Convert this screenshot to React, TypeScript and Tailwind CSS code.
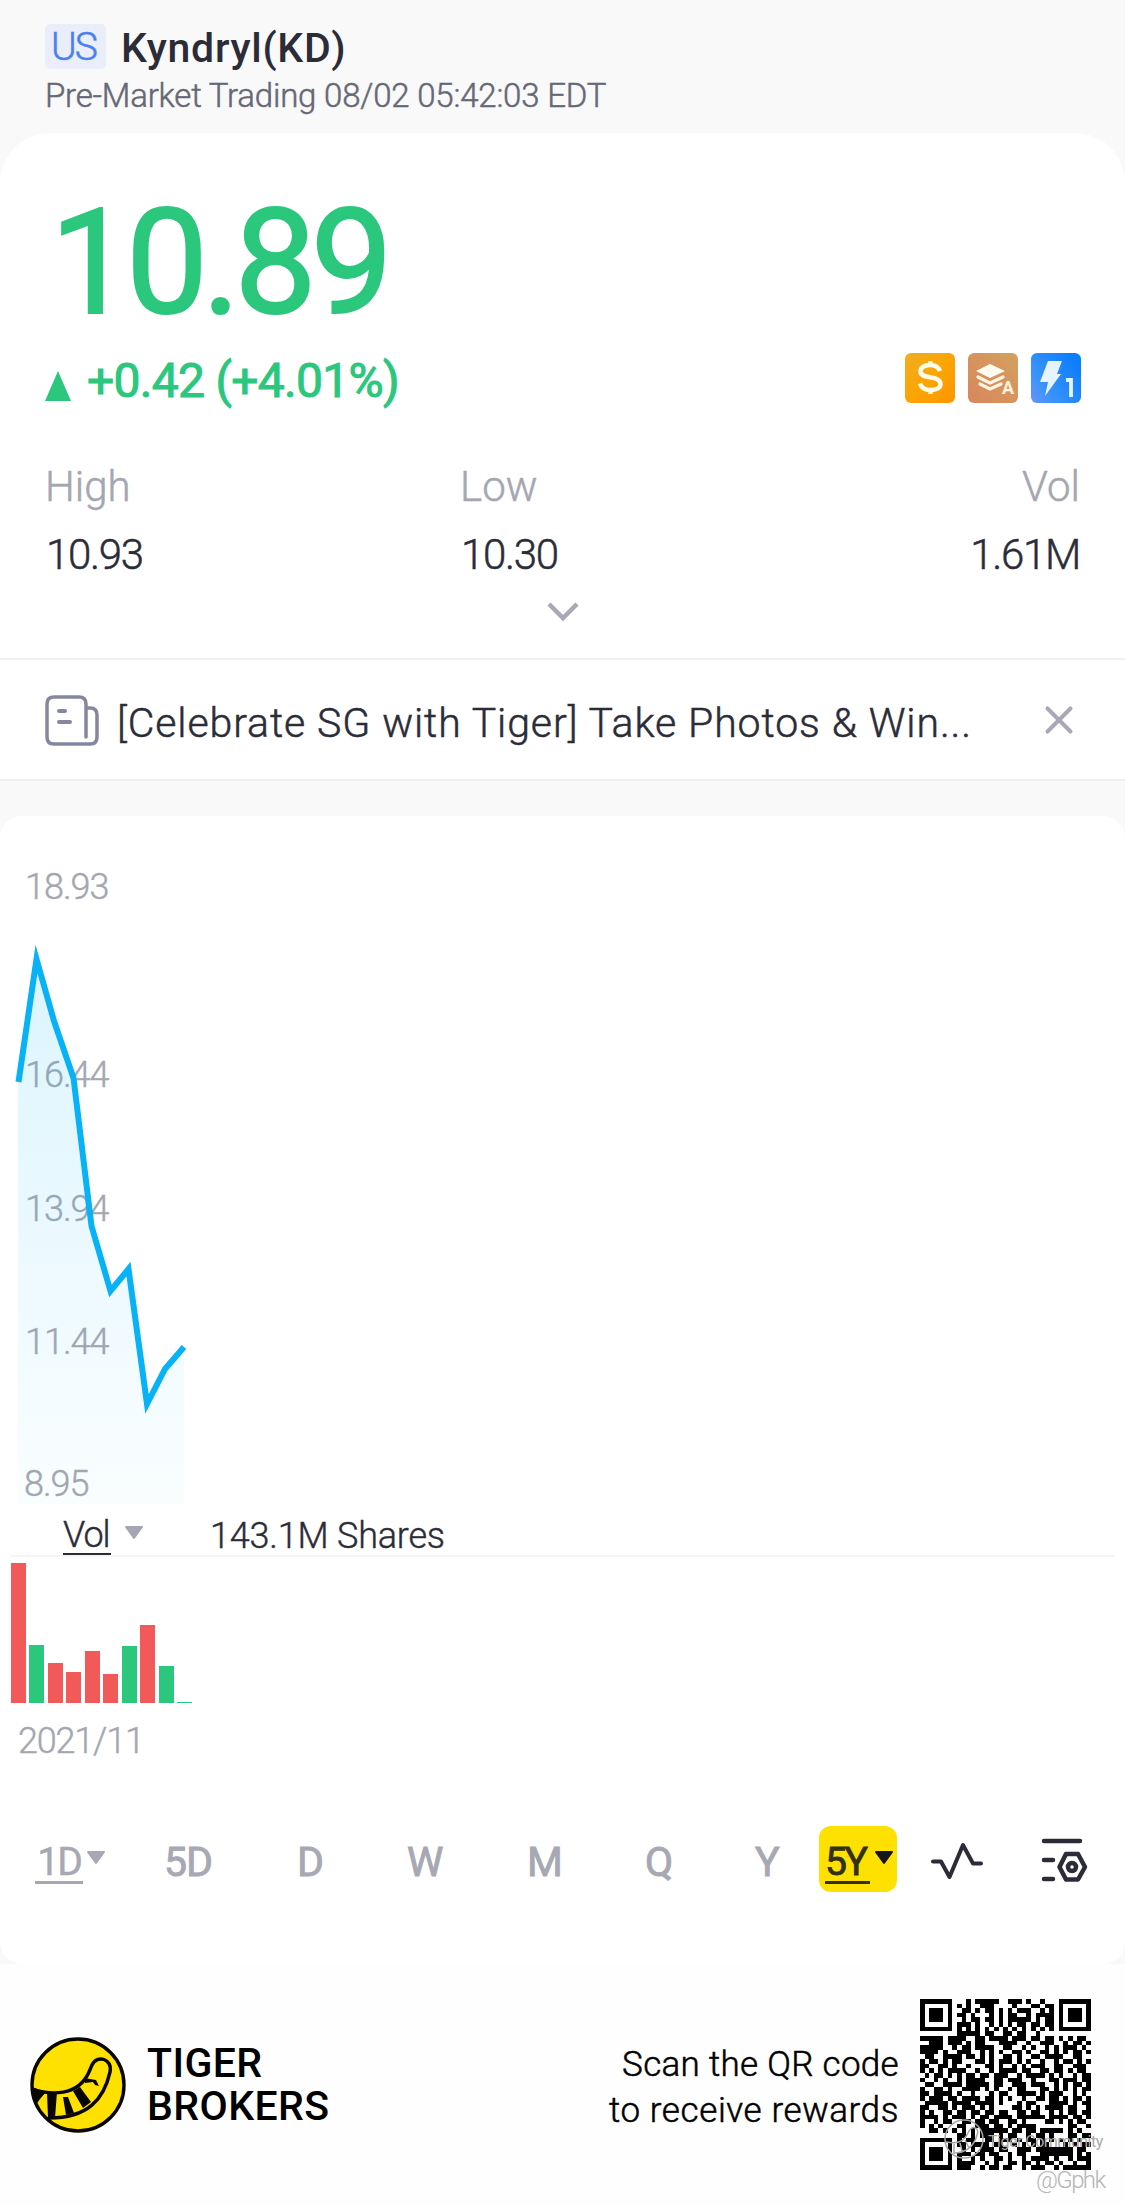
import { X } from "lucide-react"

const stats = [
  { label: "High", value: "10.93", align: "text-left" },
  { label: "Low", value: "10.30", align: "text-left" },
  { label: "Vol", value: "1.61M", align: "text-right" },
]

const volumes = [
  { h: 140, up: false },
  { h: 58, up: true },
  { h: 40, up: false },
  { h: 31, up: false },
  { h: 52, up: false },
  { h: 29, up: false },
  { h: 57, up: true },
  { h: 78, up: false },
  { h: 37, up: true },
  { h: 1.5, up: true },
]

const qrRows = [
  "#######...#.#####..###.#..#...#######",
  "#.....#.#.#..###....#...##.##.#.....#",
  "#.###.#..##.#.##.#.#.###..#.#.#.###.#",
  "#.###.#.##.#...#.#.##..#.####.#.###.#",
  "#.###.#..#.##.##.#.#####.#.##.#.###.#",
  "#.....#.###.#..#.#.#.##.##.##.#.....#",
  "#######.#.#.#.#.#.#.#.#.#.#.#.#######",
  "........#####.##..##.##..#...........",
  "#####.####..##.####.###.##.##.#.#.##.",
  "..###.###.#.##...####..#..###..#.##.#",
  "#####..#.##.####..##..#.#..#.#.###.#.",
  "####.#..###..#.#.#..##.#..##.#.#.##.#",
  ".##..####.##.#.#..##.#..##.####..##..",
  "#.##.#.##...##.#.###.#.#..#..#.##.#.#",
  "##..##.#..#...##.#..#.#.###..##..###.",
  "#.#.#.####..#..#.####.##..##.##.#.##.",
  ".#.##.#.#.##.##.###..#.####.#.#..#.##",
  "#..#.#..#.####..##.###..#...##.###.##",
  ".##..####.#####.##..###.###..#.#.##.#",
  "#..##.#..####.#.#..#.##...##.#.#.#.##",
  "##.####.#..#...#.##..####.#.###..#.#.",
  "#.###.##.####.##.#.#..#..##.##.#.##.#",
  ".#####.####.####.#...#.##...####.#.##",
  "##..##.#.###.#.#....##.#.#.####.##..#",
  "#.#..##.##.##.##.##..##.##..#.#.##.##",
  "####.#.###.#.##.####.######.####.##.#",
  "#..#.##..##.##.##..##.#....##.#.#.##.",
  "#.#.#...##..###.##.#.####.......##..#",
  "..##.#.#.#.#.######.##.##.#####.#.#..",
  "........##.#.###.#.##..#.##.#...##.##",
  "#######.#.##..##.###.#.##.#.#.#.#.#..",
  "#.....#.##.####.##..#.#.#.##...#.#.##",
  "#.###.#..#.#.###.##..###.########.##.",
  "#.###.#.###.##.##..#.##...#######.#.#",
  "#.###.#.#..#.#..##.#..#.####.#..#.###",
  "#.....#.####..#.#..##.##.#.##.#..#..#",
  "#######.###..#.##.##..#.###..#.######",
]

const qrPath = qrRows
  .map((row, y) => row.split("").map((c, x) => (c === "#" ? `M${x} ${y}h1v1h-1z` : "")).join(""))
  .join("")

function Caret({ className }: { className: string }) {
  return (
    <svg viewBox="0 0 20 15" className={className} fill="currentColor" stroke="currentColor" strokeWidth="2" strokeLinejoin="round">
      <path d="M2 2H18L10 13Z" />
    </svg>
  )
}

function TigerLogo({ className }: { className: string }) {
  return (
    <svg viewBox="0 0 96 96" className={className} fill="none">
      <circle cx="48" cy="48" r="46" fill="#ffe100" stroke="#080600" strokeWidth="3.4" />
      <path d="M2 52C20 58 48 60 59 35L62 28C67 17 83 22 80 35C74 62 58 81 19 81" stroke="#080600" strokeWidth="3.4" />
      <path d="M2 50L16 55L10 62L6 68Z M17 55H27L25 81H18Z M33 60L38 60L44 76L36 78Z M43 54L50 50L61 65L53 71Z M54 41L66 43L69 49L65 48L63 45L55 46Z" fill="#080600" />
    </svg>
  )
}

function Badges() {
  return (
    <div className="flex gap-[13px]">
      <svg viewBox="0 0 50 50" className="size-[50px]">
        <defs>
          <linearGradient id="gold" x1="0" y1="0" x2="1" y2="1">
            <stop stopColor="#f0ad22" />
            <stop offset="0.5" stopColor="#fba504" />
            <stop offset="1" stopColor="#ff9500" />
          </linearGradient>
        </defs>
        <rect width="50" height="50" rx="6" fill="url(#gold)" />
        <path d="M35 18C33 13 29 12 25 12C19 12 15.500 15 15.500 18.500C15.500 27 35.500 21.500 35.500 31C35.500 35 31 37 25.500 37C20 37 16.500 35 15 30.500M25.500 8V12M25.500 37V41" fill="none" stroke="#fffbe8" strokeWidth="4.500" />
      </svg>
      <svg viewBox="0 0 50 50" className="size-[50px]">
        <defs>
          <linearGradient id="bronze" x1="0" y1="1" x2="1" y2="0">
            <stop stopColor="#d8865e" />
            <stop offset="1" stopColor="#d3a15d" />
          </linearGradient>
        </defs>
        <rect width="50" height="50" rx="6" fill="url(#bronze)" />
        <path d="M22 11L37 18L22 25L8 18Z" fill="#fffaf0" />
        <path d="M10 24L22 30L35 24M12 31L22 36L33 31" fill="none" stroke="#fff3e2" strokeWidth="3.200" strokeLinecap="round" strokeLinejoin="round" />
        <text x="34" y="41" fill="#fff3e0" fontSize="18" fontWeight="700" fontFamily="Roboto, sans-serif">A</text>
      </svg>
      <svg viewBox="0 0 50 50" className="size-[50px]">
        <defs>
          <linearGradient id="blue" x1="0" y1="1" x2="1" y2="0.3">
            <stop stopColor="#6d91f5" />
            <stop offset="0.3" stopColor="#3c94fb" />
            <stop offset="1" stopColor="#0c7dfb" />
          </linearGradient>
        </defs>
        <rect width="50" height="50" rx="6" fill="url(#blue)" />
        <path d="M17 8H31L26 21H30L14 43L17 29H9Z" fill="#e6f4ff" />
        <path d="M35 27H40V44" fill="none" stroke="#e6f4ff" strokeWidth="3.800" />
      </svg>
    </div>
  )
}

function PriceChart() {
  return (
    <div className="relative h-[700px] text-[36px] leading-[44px] tracking-[-1px]">
      <span className="absolute left-[25px] top-[49px]">18.93</span>
      <span className="absolute left-[25px] top-[237px]">16.44</span>
      <span className="absolute left-[25px] top-[371px]">13.94</span>
      <span className="absolute left-[25px] top-[504px]">11.44</span>
      <span className="absolute left-[24px] top-[646px]">8.95</span>
      <svg viewBox="0 816 1125 700" className="relative h-[700px] w-full" fill="none">
        <defs>
          <linearGradient id="area" x1="0" y1="0" x2="0" y2="1">
            <stop stopColor="#00b4f4" stopOpacity="0.14" />
            <stop offset="1" stopColor="#00b4f4" stopOpacity="0.02" />
          </linearGradient>
        </defs>
        <path d="M18 1082L36 959L54 1021L73 1078L91.500 1226L110 1291L128.500 1269L147 1404L164 1369L184 1347V1504H18Z" fill="url(#area)" />
        <path d="M18.500 1082L36.500 959L54 1021L73.500 1078L91.500 1226L110.500 1291L128.500 1269L147 1404L165 1369L184 1347" stroke="#08b2f7" strokeWidth="6" strokeMiterlimit="10" />
      </svg>
    </div>
  )
}

export default function App() {
  return (
    <div className="h-[2205px] w-[1125px] overflow-hidden bg-[#f9f9f9] font-['Roboto',sans-serif] text-[#2b2c38]">
      {/* Header */}
      <header className="h-[133px] pl-[45px] pt-[23px]">
        <div className="flex h-[46px] items-center">
          <div className="flex h-[45px] w-[61px] items-center justify-center rounded-[5px] bg-[#e9eefa] pr-[4px] pt-[2px] text-[39px] font-light tracking-[-2px] text-[#4a7ff0] [-webkit-text-stroke:0.5px]">US</div>
          <h1 className="ml-[15px] mt-[5px] text-[41px] font-medium tracking-[0.7px]">Kyndryl(KD)</h1>
        </div>
        <p className="mt-[5px] text-[33px] font-light leading-[44px] tracking-[-0.2px] text-[#666876] [-webkit-text-stroke:0.5px]">Pre-Market Trading 08/02 05:42:03 EDT</p>
      </header>

      {/* Quote */}
      <section className="h-[527px] rounded-t-[50px] border-b-2 border-[#f0f0f1] bg-white px-[45px] pt-[61px]">
        <div className="pl-[5px] text-[146px] font-normal leading-[140px] tracking-[-6px] text-[#2ac77c] [-webkit-text-stroke:2px]">10.89</div>
        <div className="mt-[19px] flex h-[60px] items-center justify-between text-[#2ac77c]">
          <div className="flex items-center">
            <svg viewBox="0 0 26 30" className="mt-[6px] h-[30px] w-[26px]" fill="currentColor">
              <path d="M13 0L26 30H0Z" />
            </svg>
            <span className="ml-[16px] mt-[-4px] text-[48px] font-normal leading-[60px] tracking-[-0.7px] [-webkit-text-stroke:1px]">+0.42 (+4.01%)</span>
          </div>
          <div className="-mr-px -mt-[11px]">
            <Badges />
          </div>
        </div>
        <div className="mt-[46px] grid grid-cols-[415px_1fr_1fr] [-webkit-text-stroke:0.5px]">
          {stats.map((s) => (
            <div key={s.label} className={s.align}>
              <div className="text-[42px] font-light leading-[56px] text-[#a5a6b2]">{s.label}</div>
              <div className="mt-[12px] pl-px text-[42px] font-light leading-[56px] tracking-[-1.300px]">{s.value}</div>
            </div>
          ))}
        </div>
        <svg viewBox="0 0 32 20" className="mx-auto mt-[19px] h-[20px] w-[32px]" fill="none" stroke="#a8a8b6" strokeWidth="4.500">
          <path d="M2 2L16 16L30 2" />
        </svg>
      </section>

      {/* News */}
      <section className="flex h-[121px] items-center border-b-2 border-[#efefef] bg-white pl-[45px] pr-[43px]">
        <svg viewBox="0 0 54 51" className="mt-px h-[51px] w-[54px] shrink-0" fill="none" stroke="#85879f" strokeWidth="3.500" strokeLinecap="round">
          <path d="M41 42V9Q41 2 34 2H9Q2 2 2 9V42Q2 49 9 49H45Q52 49 52 42V20Q52 13 45 13H41" />
          <path d="M14 16H20M14 27H25" strokeWidth="4" />
        </svg>
        <p className="ml-[18px] mt-[8px] whitespace-nowrap text-[41px] font-light tracking-[0.9px] [-webkit-text-stroke:0.5px]">[Celebrate SG with Tiger] Take Photos &amp; Win...</p>
        <X className="ml-auto mt-px size-[46px] text-[#a8a8b6]" strokeWidth={2.1} />
      </section>

      {/* Chart */}
      <section className="mt-[35px] h-[1148px] rounded-[22px] bg-white font-light text-[#a5a6b0] [-webkit-text-stroke:0.4px]">
        <PriceChart />
        <div className="mx-[10px] flex h-[41px] items-center border-b-2 border-[#f5f5f5] pl-[53px] text-[36px] text-[#2b2c38]">
          <span className="h-[38px] w-[48px] border-b-[2px] border-[#2b2c38] leading-[37px] tracking-[-1px]">Vol</span>
          <Caret className="ml-[13px] mt-[-6px] h-[15px] w-[20px] text-[#a5a6b4]" />
          <span className="ml-[66px] tracking-[-0.2px]">143.1M Shares</span>
        </div>
        <div className="ml-[11px] flex h-[146px] items-end gap-[3.450px]">
          {volumes.map((v, i) => (
            <div key={i} className={v.up ? "w-[15px] bg-[#2ac77c]" : "w-[15px] bg-[#f25a59]"} style={{ height: v.h }} />
          ))}
        </div>
        <div className="ml-[18px] mt-[16px] text-[36px] leading-[44px] tracking-[-1.200px]">2021/11</div>

        {/* Periods */}
        <div className="mt-[63px] flex h-[66px] items-center text-[41px] font-normal leading-[44px] text-[#a7a8b4] [-webkit-text-stroke:0.9px]">
          <span className="ml-[35px] mt-[4px] h-[46px] w-[48px] shrink-0 border-b-[3px] border-[#a7a8b4] text-center text-[39px] leading-[49px] tracking-[-2px] [-webkit-text-stroke:0.5px]">1D</span>
          <Caret className="ml-[3px] mt-[-3px] h-[15px] w-[20px] shrink-0" />
          <span className="ml-[58px] mt-[6px] w-[50px] shrink-0 tracking-[-1px]">5D</span>
          <span className="ml-[83px] mt-[6px] w-[28px] shrink-0">D</span>
          <span className="ml-[82px] mt-[6px] w-[38px] shrink-0">W</span>
          <span className="ml-[82px] mt-[6px] w-[36px] shrink-0">M</span>
          <span className="ml-[82px] mt-[6px] w-[28px] shrink-0">Q</span>
          <span className="ml-[82px] mt-[6px] w-[26px] shrink-0">Y</span>
          <div className="ml-[38px] flex h-[66px] w-[78px] shrink-0 items-center rounded-[12px] bg-[#ffe100] pl-[6px] text-[#33301a]">
            <span className="mt-[4px] h-[46px] w-[45px] border-b-[3px] border-[#33301a] text-left text-[39px] leading-[49px] tracking-[-2.500px]">5Y</span>
            <Caret className="ml-[4px] mt-[-3px] h-[15px] w-[20px] text-[#15151d]" />
          </div>
          <svg viewBox="0 0 52 38" className="ml-[34px] mt-[3px] h-[38px] w-[52px] shrink-0" fill="none" stroke="#2b2c38" strokeWidth="4" strokeLinecap="round" strokeLinejoin="round">
            <path d="M2 19.500H10L18.500 35L32 3L42 21.500H50" />
          </svg>
          <svg viewBox="0 0 48 46" className="ml-[58px] mt-[2px] h-[46px] w-[48px] shrink-0" fill="none" stroke="#2b2c38" strokeWidth="4.500" strokeLinecap="round" strokeLinejoin="round">
            <path d="M3 4H39M3 23H12M3 42H12M25 17H37L44 30L37 42.500H25L18.500 30Z" />
            <circle cx="31" cy="30" r="4" />
          </svg>
        </div>
      </section>

      {/* Footer */}
      <footer className="flex h-[241px] bg-[#fefefe] text-black">
        <TigerLogo className="ml-[30px] mt-[73px] size-[96px]" />
        <div className="ml-[21px] mt-[78px] text-[41px] font-medium leading-[43px] tracking-[0.4px]">
          <div>TIGER</div>
          <div>BROKERS</div>
        </div>
        <div className="ml-auto mt-[78px] whitespace-nowrap text-right text-[35px] font-light leading-[46px] [-webkit-text-stroke:0.5px]">
          <div className="tracking-[0.3px]">Scan the QR code</div>
          <div className="tracking-[0.6px]">to receive rewards</div>
        </div>
        <div className="relative ml-[21px] mr-[34px] mt-[35px] size-[171px] shrink-0">
          <svg viewBox="0 0 37 37" className="size-[171px]" shapeRendering="crispEdges">
            <path d={qrPath} />
          </svg>
          <svg viewBox="0 0 40 40" className="absolute left-[24px] top-[120px] size-[40px]" fill="none" stroke="#a5a5a5" strokeWidth="1.500">
            <circle cx="20" cy="20" r="19" />
            <path d="M2 23C12 25 20 24 25 12C29 5 36 10 33 16C30 27 23 34 9 34M10 25V33M16 24L18 32M21 21L25 29" />
          </svg>
          <span className="absolute left-[68px] top-[131px] whitespace-nowrap text-[16px] font-normal leading-[24px] tracking-[-0.5px] text-[#a9a9a9]">Tiger Community</span>
          <span className="absolute left-[116px] top-[167px] text-[24px] font-light leading-[28px] tracking-[-1.600px] text-[#b5b5b5]">@Gphk</span>
        </div>
      </footer>
    </div>
  )
}
